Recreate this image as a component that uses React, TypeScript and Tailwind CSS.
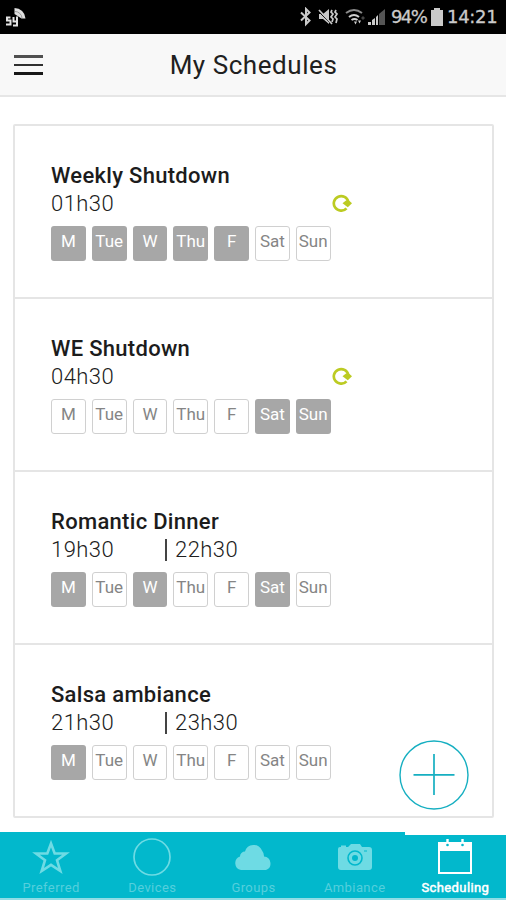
import type { ReactNode } from "react";

const DAYS = ["M", "Tue", "W", "Thu", "F", "Sat", "Sun"];

type Schedule = { name: string; start: string; end?: string; repeat?: boolean; active: string[] };

const SCHEDULES: Schedule[] = [
  { name: "Weekly Shutdown", start: "01h30", repeat: true, active: ["M", "Tue", "W", "Thu", "F"] },
  { name: "WE Shutdown", start: "04h30", repeat: true, active: ["Sat", "Sun"] },
  { name: "Romantic Dinner", start: "19h30", end: "22h30", active: ["M", "W", "Sat"] },
  { name: "Salsa ambiance", start: "21h30", end: "23h30", active: ["M"] },
];

function StatusBar() {
  return (
    <div className="flex h-[34px] shrink-0 items-center bg-black pl-[5px] pr-[8px] text-[#cacaca]">
      <svg width="22" height="22" viewBox="0 0 22 22" className="mb-[1px]">
        <path d="M9.500 2a11 11 0 0 1 11 10.500h-4L9.500 8Z" fill="#dedede" />
        <path d="M10 5.500a7 7 0 0 1 7 6.500" fill="none" stroke="#888" strokeWidth="0.800" />
        <path d="M5.500 11.500H2v3h3.500v4H1M8.500 11v4.500h3.500M12 10.500v9H8" fill="none" stroke="#e4e4e4" strokeWidth="2" />
      </svg>
      <div className="flex-1" />
      <svg width="14" height="20" viewBox="0 0 14 20" fill="none" stroke="currentColor" strokeWidth="2">
        <path d="M2 5.500 10.500 13.500 7 17V2l3.500 3.500L2 13.500" />
      </svg>
      <svg width="20" height="20" viewBox="0 0 20 20" className="ml-[5px]">
        <path d="M1 7h4l6-5v15l-6-5H1Z" fill="currentColor" />
        <path d="M0 4l13 13" stroke="#000" strokeWidth="1" />
        <path d="M1 3l13 14" stroke="currentColor" strokeWidth="1.700" />
        <path d="M14 3l-1 2 2 2-2 3 2 2-1 3M18 3l-1 2 2 2-2 3 2 2-1 4" fill="none" stroke="currentColor" strokeWidth="1.700" />
      </svg>
      <svg width="21" height="20" viewBox="0 0 21 20" fill="none" strokeWidth="2" className="ml-[7px]">
        <path d="M1 6Q9 0 17 6" stroke="#8a8a8a" />
        <path d="M4 10q5-4 10 0M6.500 13q3-2 6 0" stroke="#d0d0d0" />
        <path d="M9 14.500h3l-1.500 3ZM13 13.500l1.500 3 1.500-3Z" fill="#d0d0d0" />
        <path d="m18 9 2 2-2 2-2-2Z" fill="#444" />
      </svg>
      <svg width="19" height="20" viewBox="0 0 19 20" className="ml-[1px]">
        <path d="M12 7l6-5v16h-6Z" fill="#555" />
        <path d="M1 15h3v3H1ZM5 13l3-2v7H5ZM9 10l2-2v10H9Z" fill="currentColor" />
      </svg>
      <span className="ml-[5px] w-[37px] whitespace-nowrap font-['DejaVu_Sans'] text-[18px] leading-none tracking-[-1.6px] [-webkit-text-stroke:0.3px_#cacaca]">94%</span>
      <svg width="12" height="20" viewBox="0 0 12 20" className="ml-[3px]">
        <path d="M3 1h6v2h3v16H0V3h3Z" fill="currentColor" />
      </svg>
      <span className="ml-[4px] w-[51px] whitespace-nowrap font-['DejaVu_Sans'] text-[18px] leading-none tracking-[-0.3px] [-webkit-text-stroke:0.3px_#cacaca]">14:21</span>
    </div>
  );
}

function Header() {
  return (
    <header className="relative flex h-[63px] shrink-0 items-center justify-center border-b-2 border-[#e6e6e6] bg-[#f8f8f8]">
      <button aria-label="Menu" className="absolute left-[14px] top-[21px] flex flex-col gap-[6px]">
        <span className="h-[2.500px] w-[29px] bg-[#505050]" />
        <span className="h-[2.500px] w-[29px] bg-[#303030]" />
        <span className="h-[2.500px] w-[29px] bg-[#181818]" />
      </button>
      <h1 className="pl-px pt-px text-[26px] leading-[30px] tracking-[0.55px] text-[#202020]">My Schedules</h1>
    </header>
  );
}

function RepeatIcon() {
  return (
    <svg width="20" height="18" viewBox="0 0 20 18">
      <path d="M14.500 14.300A7.300 7.300 0 1 1 16.300 8" fill="none" stroke="#bccb22" strokeWidth="2.700" />
      <path d="M10.500 9.300 14 6.500l3.500.5 2.500 2.300-4.200 3.900Z" fill="#bccb22" />
    </svg>
  );
}

function Row({ item }: { item: Schedule }) {
  return (
    <li className="h-[173px] border-b-2 border-[#e5e5e5] pl-[36px] pt-[35px] last:border-b-0">
      <h2 className="h-[28px] whitespace-nowrap text-[22px] font-medium leading-[30px] tracking-[0.3px] text-[#1c1c1c]">{item.name}</h2>
      <div className="flex h-[29px] items-center text-[22px] font-light leading-[29px] tracking-[0.45px] text-[#202020]">
        <span className="w-[114px]">{item.start}</span>
        {item.end && (
          <>
            <span className="h-[22px] w-[2px] bg-[#444]" />
            <span className="ml-[8px]">{item.end}</span>
          </>
        )}
        {item.repeat && <span className="-mt-[2px] ml-[167px] flex"><RepeatIcon /></span>}
      </div>
      <div className="mt-[7.500px] flex gap-[6px]">
        {DAYS.map((day) => (
          <span
            key={day}
            className={
              item.active.includes(day)
                ? "flex h-[35px] w-[34.800px] justify-center rounded-[3px] bg-[#a7a7a7] text-[17px] leading-[31px] text-white"
                : "flex h-[35px] w-[34.800px] justify-center rounded-[3px] border-[1.500px] border-[#d0d0d0] text-[17px] leading-[29px] text-[#858585]"
            }
          >
            {day}
          </span>
        ))}
      </div>
    </li>
  );
}

function Tab({ label, active, children }: { label: string; active?: boolean; children: ReactNode }) {
  return (
    <button
      className={
        active
          ? "flex flex-col items-center border-t-[3px] border-white pt-[2px] text-[13px] text-white [-webkit-text-stroke:0.5px_#fff]"
          : "flex flex-col items-center pl-px pt-[5px] text-[13px] text-[#55cfdc]"
      }
    >
      <svg width="40" height="40" viewBox="0 0 40 40">{children}</svg>
      <span className="mt-[1px] leading-[19px] tracking-[0.4px]">{label}</span>
    </button>
  );
}

export default function App() {
  return (
    <div className="relative flex h-[900px] w-[506px] flex-col overflow-hidden bg-white font-[Roboto,sans-serif]">
      <StatusBar />
      <Header />
      <main className="flex-1 pl-[13px] pr-[12px] pt-[27px]">
        <ul className="h-[694px] overflow-hidden rounded-[2px] border-2 border-[#e5e5e5]">
          {SCHEDULES.map((item) => (
            <Row key={item.name} item={item} />
          ))}
        </ul>
      </main>
      <button aria-label="Add schedule" className="absolute left-[398px] top-[739px]">
        <svg width="72" height="72" viewBox="0 0 72 72" fill="none" stroke="#16afc1">
          <circle cx="36" cy="36" r="34" strokeWidth="1.400" />
          <path d="M36 15v41M15.500 35.800h41" strokeWidth="1.700" />
        </svg>
      </button>
      <nav className="grid h-[68px] shrink-0 grid-cols-5 border-b-[2px] border-[#8fdde5] bg-[#02b8cc]">
        <Tab label="Preferred">
          <path d="m20 6.500 3.700 10H35l-9 6.700L29.300 34 20 27.800 10.700 34 14 23.200 5 16.500h11.300Z" fill="none" stroke="#6edbe4" strokeWidth="2.600" />
        </Tab>
        <Tab label="Devices">
          <circle cx="20" cy="20" r="18" fill="none" stroke="#6edbe4" strokeWidth="1.700" />
        </Tab>
        <Tab label="Groups">
          <path d="M8 33a7 7 0 0 1-1-13.500 5 5 0 0 1 5-5 9 9 0 0 1 17-1 9 9 0 0 1 2 6 7 7 0 0 1 2 13.500Z" fill="#6edbe4" />
        </Tab>
        <Tab label="Ambiance">
          <path d="M5 10h1V8.500h5V10h2l3-3h9l2 3h7q3 0 3 3v17q0 3-3 3H6q-3 0-3-3V12q0-2 2-2Z" fill="#6edbe4" />
          <circle cx="20" cy="21" r="7" fill="none" stroke="#02b8cc" strokeWidth="1.600" />
          <circle cx="20" cy="21" r="3" fill="#02b8cc" />
          <path d="M29 14h3" stroke="#02b8cc" />
        </Tab>
        <Tab label="Scheduling" active>
          <path d="M3 5h34v32H3ZM5 14v21h30V14Z" fill="#fff" fillRule="evenodd" />
          <path d="M12.500 2v4M27.500 2v4" stroke="#fff" strokeWidth="2.400" />
          <circle cx="12.500" cy="8" r="1.300" fill="#02b8cc" />
          <circle cx="27.500" cy="8" r="1.300" fill="#02b8cc" />
        </Tab>
      </nav>
    </div>
  );
}
